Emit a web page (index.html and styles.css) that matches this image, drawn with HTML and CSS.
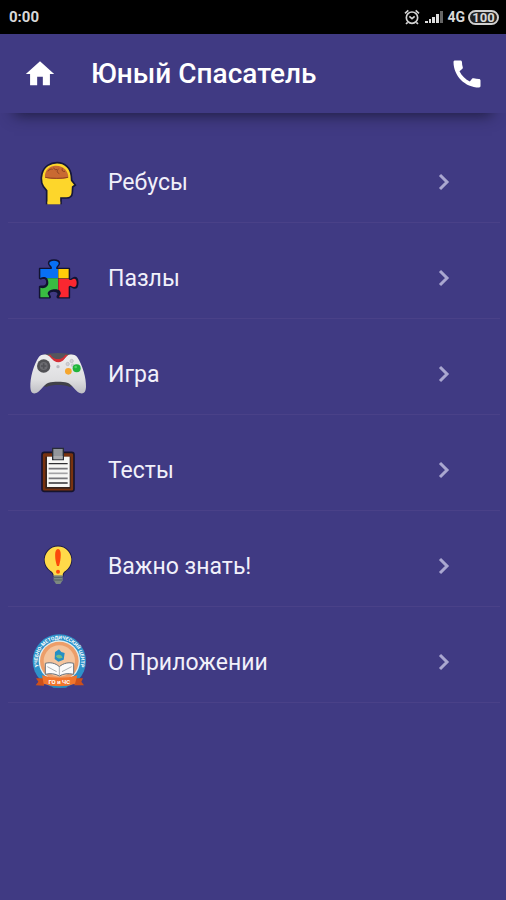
FILE: index.html
```
<!DOCTYPE html>
<html lang="ru">
<head>
    <meta charset="utf-8">
    <meta name="viewport" content="width=device-width, initial-scale=1">
    <title>Юный Спасатель</title>
    <link rel="stylesheet" href="styles.css">
</head>

<body>
    <div class="statusBar">
        <span class="clock">0:00</span>
        <svg class="alarm" viewBox="0 0 48 48" width="16" height="16" fill="none" stroke="#d4d4d4" stroke-width="5">
            <circle cx="24" cy="26" r="17"/>
            <path d="M3 13 13 4M45 13 35 4M11 40 6 45M37 40 42 45M16 22l8 7 8-7"/>
        </svg>
        <svg class="signal" viewBox="0 0 18 12" width="18" height="12" fill="#dedede">
            <path d="M0 10h3v2H0zM4 8h2v4H4zM7 6h3v6H7zM11 3h3v9h-3z"/>
            <path fill="#666" d="M15 0h3v12h-3z"/>
        </svg>
        <span class="network">4G</span>
        <span class="battery">100</span>
    </div>

    <header class="topBar">
        <a href="#" class="topLink" aria-label="Главная">
            <svg viewBox="0 0 24 24" width="34" height="34" fill="white"><path d="M10 20v-6h4v6h5v-8h3L12 3 2 12h3v8z"/></svg>
        </a>
        <h1>Юный Спасатель</h1>
        <a href="#" class="topLink" aria-label="Позвонить">
            <svg viewBox="0 0 24 24" width="36" height="36" fill="white"><path d="M20.01 15.38c-1.23 0-2.42-.2-3.53-.56-.35-.12-.74-.03-1.01.24l-1.57 1.97c-2.83-1.35-5.48-3.9-6.89-6.83l1.95-1.66c.27-.28.35-.67.24-1.02-.37-1.11-.56-2.3-.56-3.53 0-.54-.45-.99-.99-.99H4.19C3.65 3 3 3.24 3 3.99 3 13.28 10.73 21 20.01 21c.71 0 .99-.63.99-1.18v-3.45c0-.54-.45-.99-.99-.99z"/></svg>
        </a>
    </header>

    <nav class="menu">
        <a href="#" class="menuItem">
            <!-- head with brain -->
            <svg class="picture" viewBox="24 6 180 180">
                <path d="M80 160V122C66 108 61 88 66 71 72 49 91 38 111 38c24 0 41 16 43 40l1 13 11 14-8 6-1 18c-1 11-6 15-18 15h-16v16z" fill="#fdd62b" stroke="#15163a" stroke-width="5"/>
                <path d="M82 159h39" stroke="#fdd62b" stroke-width="8"/>
                <path d="M75 83c-2-17 8-32 26-35 26-4 44 13 44 35-16 5-52 5-70 0z" fill="#c96a32"/>
                <path d="M84 64c3-6 9-8 14-6M101 53c2 7 6 7 10 5M116 56c-7 7-5 12 2 15M127 55c-3 7 2 11 8 9M76 82c18 4 50 4 68 0" fill="none" stroke="#8d4322" stroke-width="3"/>
            </svg>
            <span class="label">Ребусы</span>
            <svg class="arrow" viewBox="0 0 12 18"><path d="M2 2l7 7-7 7"/></svg>
        </a>
        <a href="#" class="menuItem">
            <!-- puzzle -->
            <svg class="picture" viewBox="24 9 180 180">
                <path d="M59 71h35c3-5-8-9-8-16 0-7 7-10 16-10s16 3 16 10c0 7-11 11-8 16h38v33c5 4 9-6 16-6 7 0 9 6 9 15s-2 16-9 16c-7 0-11-9-16-6v35h-34c-6-2 3-9 1-13-2-5-8-7-14-7s-13 2-14 7c-2 5 7 11 2 13H59v-33c2-3 6 0 11-1 7-1 11-6 11-13s-4-11-11-12c-5 0-9 4-11 1z" fill="#111331" stroke="#111331" stroke-width="5" stroke-linejoin="round"/>
                <path d="M61 72h34c4-8-7-10-7-17 0-5 6-8 14-8s14 3 14 8c0 7-9 9-7 17h5v28H81c-5-5-13-6-20-1z" fill="#0870f3"/>
                <path d="M115 72h31v28h-31z" fill="#ffcd09"/>
                <path d="M81 100h33v34c-13-3-29 1-31 11-1 5 6 7 4 12H61v-29c13 5 24-4 24-14 0-6-2-11-4-14z" fill="#39bd42"/>
                <path d="M115 101h31c5 9 10 0 16 0 6 0 8 5 8 12s-2 13-8 13c-6 0-11-8-16-1v32h-28c-1-6 6-8 4-14-1-5-3-8-7-9z" fill="#fa2730"/>
            </svg>
            <span class="label">Пазлы</span>
            <svg class="arrow" viewBox="0 0 12 18"><path d="M2 2l7 7-7 7"/></svg>
        </a>
        <a href="#" class="menuItem">
            <!-- gamepad -->
            <svg class="picture" viewBox="24 12 180 180">
                <defs>
                    <linearGradient id="padBody" x2="0" y2="1">
                        <stop offset="0" stop-color="#eeeeef"/>
                        <stop offset=".65" stop-color="#dedee0"/>
                        <stop offset="1" stop-color="#bfbfc4"/>
                    </linearGradient>
                </defs>
                <path d="M65 46c31-9 66-9 98 0l-9 86H75z" fill="#55555d"/>
                <path d="M70 138c15-22 72-22 88 0l-9 3c-17-8-53-8-70 0z" fill="#414149"/>
                <path d="M57 50c8-9 22-8 31-2 15 20 37 20 52 0 10-6 23-6 31 2 17 25 28 64 27 91-1 17-8 22-19 18-16-8-22-26-37-31-15-4-41-4-56 0-15 5-21 23-37 31-11 4-17-1-18-18-1-27 9-66 26-91z" fill="url(#padBody)"/>
                <path d="M84 46c11 4 14 21 31 21s20-17 29-21l-7-2c-7 7-10 13-23 13S96 51 91 44z" fill="#d52f37"/>
                <circle cx="71" cy="78" r="20" fill="#515155"/>
                <circle cx="71" cy="78" r="12" fill="#6b6b70"/>
                <path d="M71 70v16M63 78h16" stroke="#505055" stroke-width="5"/>
                <circle cx="114" cy="80" r="5" fill="#b8b8bf"/>
                <g fill="#d2d2d6" stroke="#b5b5ba" stroke-width="2">
                    <circle cx="143" cy="72" r="5"/>
                    <circle cx="155" cy="63" r="5"/>
                    <circle cx="158" cy="76" r="4"/>
                </g>
                <circle cx="145" cy="94" r="10" fill="#f5a62e"/>
                <circle cx="170" cy="85" r="12" fill="#20b43b"/>
                <circle cx="167" cy="81" r="4" fill="#53d466"/>
            </svg>
            <span class="label">Игра</span>
            <svg class="arrow" viewBox="0 0 12 18"><path d="M2 2l7 7-7 7"/></svg>
        </a>
        <a href="#" class="menuItem">
            <!-- clipboard -->
            <svg class="picture" viewBox="24 15 180 180">
                <rect x="66" y="52" width="96" height="117" rx="7" fill="#79320f" stroke="#17142e" stroke-width="5"/>
                <path d="M76 65h76v96H76z" fill="#34241e"/>
                <path d="M81 65h68v91H81z" fill="#f7f7f5"/>
                <path d="M98 40h32v34H98z" fill="#92969b" stroke="#292d37" stroke-width="4"/>
                <path d="M101 63h27v10h-27z" fill="#a8aaad"/>
                <path d="M86 86h57M86 144h57" stroke="#303033" stroke-width="4"/>
                <path d="M86 101h57M86 130h57" stroke="#77777b" stroke-width="5"/>
                <path d="M86 115h57" stroke="#a3a3a5" stroke-width="5"/>
            </svg>
            <span class="label">Тесты</span>
            <svg class="arrow" viewBox="0 0 12 18"><path d="M2 2l7 7-7 7"/></svg>
        </a>
        <a href="#" class="menuItem">
            <!-- bulb -->
            <svg class="picture" viewBox="24 18 180 180">
                <path d="M101 137c0-7-3-11-10-15a40 40 0 1 1 46 0c-7 4-9 8-9 15z" fill="#ffda49" stroke="#1c1a48" stroke-width="5"/>
                <path d="M101 138c0-8-3-12-10-16a40 40 0 1 1 46 0c-7 4-9 8-9 16z" fill="#ffda49"/>
                <path d="M101 136h27v15l-7 11h-13l-7-11z" fill="#7c8880"/>
                <path d="M101 142h27M102 150h25" stroke="#505d60" stroke-width="3"/>
                <path d="M114 57c12 0 9 31 3 51h-6c-7-20-9-51 3-51z" fill="#fb4b0b"/>
                <circle cx="114" cy="125" r="6" fill="#fb4b0b"/>
            </svg>
            <span class="label">Важно знать!</span>
            <svg class="arrow" viewBox="0 0 12 18"><path d="M2 2l7 7-7 7"/></svg>
        </a>
        <a href="#" class="menuItem">
            <!-- emblem of the training centre -->
            <svg class="picture" viewBox="24 21 180 180">
                <path id="ring" d="M59 135A65 65 0 1 1 177 135" fill="none"/>
                <circle cx="118" cy="108" r="80" fill="#2d91c9"/>
                <circle cx="118" cy="108" r="62" fill="#e2eff1"/>
                <circle cx="118" cy="108" r="58" fill="#ed9e69"/>
                <circle cx="118" cy="108" r="47" fill="#f4c49d"/>
                <text class="ringText"><textPath href="#ring" startOffset="50%">УЧЕБНО-МЕТОДИЧЕСКИЙ ЦЕНТР</textPath></text>
                <path d="M105 81l12-8 7 8 10 3-3 20-16 6-11-8z" fill="#248fc5"/>
                <path d="M107 93c11-8 18-3 21 5-10 3-16 4-21-5z" fill="#75bd84"/>
                <path d="M76 115c15-4 30-1 42 10 13-11 28-14 43-10v33c-16-4-31-2-43 5-12-7-27-9-42-5z" fill="#fafafa" stroke="#68717b" stroke-width="3"/>
                <path d="M118 126v26M82 125l28 15M155 125l-29 15" stroke="#abb1b4" stroke-width="3"/>
                <path d="M90 176h57l-8 12h-40z" fill="#248dbf"/>
                <path d="M48 160h27l-3 22-25-1 8-11zM165 160h24l-5 10 8 11h-29z" fill="#cc501b"/>
                <path d="M66 151c31 10 73 10 106 0l-7 25c-30 10-64 10-94 0z" fill="#f2752c"/>
                <text class="ribbonText" x="118" y="176">ГО и ЧС</text>
            </svg>
            <span class="label">О Приложении</span>
            <svg class="arrow" viewBox="0 0 12 18"><path d="M2 2l7 7-7 7"/></svg>
        </a>
    </nav>
</body>

</html>
```
FILE: styles.css
```
* {
    box-sizing: border-box;
}

body {
    margin: 0;
    min-height: 100vh;
    background-color: #403a83;
    font-family: Roboto, "Liberation Sans", sans-serif;
    color: #f1f0fa;
}

svg {
    display: block;
    flex-shrink: 0;
}

.statusBar {
    display: flex;
    align-items: center;
    height: 34px;
    padding: 0 7px 0 9px;
    background-color: black;
    color: #d8d8d8;
    font-size: 15px;
    font-weight: 700;
}

.clock {
    flex: 1;
}

.signal {
    margin: 0 4px 0 5px;
}

.network {
    font-size: 14px;
}

.battery {
    width: 31px;
    margin-left: 3px;
    border: 2px solid #d0d0d0;
    border-radius: 8px;
    background-color: #222;
    font-size: 13px;
    line-height: 11px;
    text-align: center;
}

.topBar {
    display: flex;
    align-items: center;
    height: 79px;
    padding: 0 21px 0 23px;
    box-shadow: 0 16px 14px -14px rgb(30, 28, 62);
}

.topBar h1 {
    flex: 1;
    margin: 0 0 0 34px;
    color: white;
    font-size: 28px;
    font-weight: 500;
}

.menu {
    margin: 14px 6px 0 8px;
}

.menuItem {
    display: flex;
    align-items: center;
    height: 96px;
    padding: 15px 50px 0 20px;
    border-bottom: 1px solid #4a4188;
    color: inherit;
    text-decoration: none;
}

.picture {
    width: 60px;
    height: 60px;
}

.label {
    flex: 1;
    margin-left: 20px;
    font-size: 23px;
}

.arrow {
    width: 12px;
    height: 18px;
    fill: none;
    stroke: #aaa7d0;
    stroke-width: 3;
}

.ringText {
    fill: white;
    font-size: 15px;
    font-weight: 700;
    text-anchor: middle;
}

.ribbonText {
    fill: white;
    font-size: 18px;
    font-weight: 700;
    text-anchor: middle;
}
```
